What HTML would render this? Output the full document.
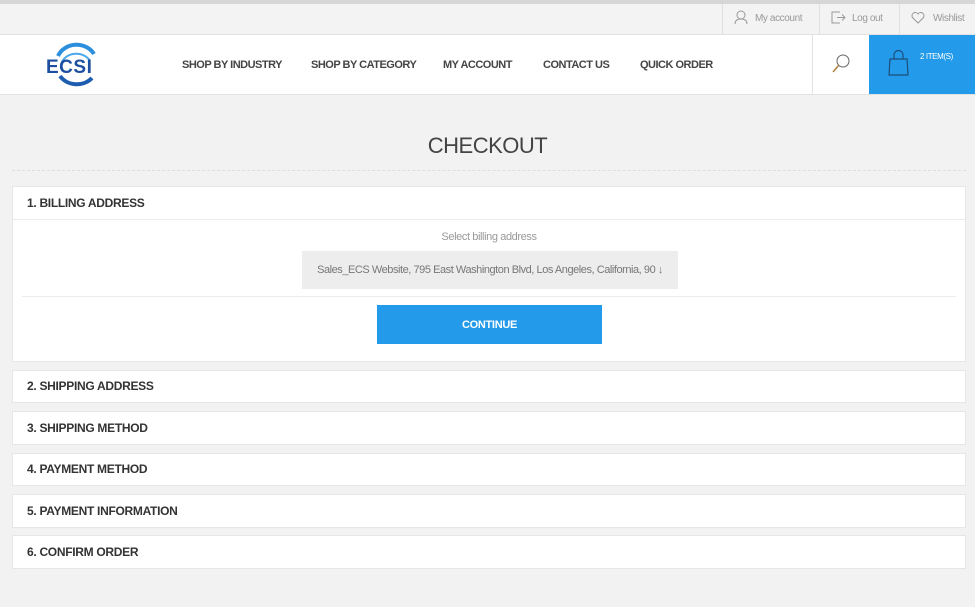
<!DOCTYPE html><html><head><style>
*{margin:0;padding:0;box-sizing:border-box}
body{width:975px;height:607px;background:#f2f2f2;font-family:"Liberation Sans",sans-serif;position:relative;overflow:hidden}
.a{position:absolute}
.top{left:0;top:0;width:975px;height:4px;background:#d6d6d6}
.hl{left:0;top:4px;width:975px;height:31px;background:#f3f3f3;border-bottom:1px solid #e2e2e2}
.lk{top:4px;height:30px;border-left:1px solid #e0e0e0;font-size:10px;color:#999;line-height:30px;letter-spacing:-.4px}
.nav{left:0;top:35px;width:975px;height:60px;background:#fff;border-bottom:1px solid #e2e2e2}
.nv{top:59px;font-size:11px;font-weight:bold;color:#444;letter-spacing:-.5px;white-space:nowrap}
.box{left:12px;width:954px;background:#fff;border:1px solid #e6e6e6}
.h{font-size:12px;font-weight:bold;color:#333;padding-left:14px;letter-spacing:-.3px}
</style></head><body>
<div class="a top"></div><div class="a hl"></div>
<div class="a lk" style="left:722px;width:97px;padding-left:32px">My account</div>
<div class="a lk" style="left:819px;width:80px;padding-left:32px">Log out</div>
<div class="a lk" style="left:899px;width:76px;padding-left:33px">Wishlist</div>
<svg class="a" style="left:734px;top:10px" width="14" height="14" fill="none" stroke="#999"><circle cx="7" cy="5" r="4"/><path d="M1 14c0-4 3-5 6-5s6 1 6 5"/></svg>
<svg class="a" style="left:831px;top:11px" width="15" height="13" fill="none" stroke="#999"><path d="M9 1H1v11h8M6 6.5h8M11 3.5l3 3-3 3"/></svg>
<svg class="a" style="left:911px;top:12px" width="14" height="12" fill="none" stroke="#999"><path d="M7 11L1.5 5.5A3 3 0 017 2a3 3 0 015.5 3.5z"/></svg>
<div class="a nav"></div>
<svg class="a" style="left:44px;top:40px" width="66" height="50"><path d="M14 16A20 18 0 0150 14" stroke="#2b8fde" stroke-width="4" fill="none"/><path d="M18 22A15 12 0 0146 21" stroke="#4aa8ea" stroke-width="2" fill="none"/><path d="M16 36A20 18 0 0048 38" stroke="#1d5db0" stroke-width="4" fill="none"/><text x="2" y="33" font-family="Liberation Sans" font-weight="bold" font-size="19" fill="#1d4fa0" letter-spacing="0.5">ECSI</text></svg>
<div class="a nv" style="left:182px">SHOP BY INDUSTRY</div>
<div class="a nv" style="left:311px">SHOP BY CATEGORY</div>
<div class="a nv" style="left:443px">MY ACCOUNT</div>
<div class="a nv" style="left:543px">CONTACT US</div>
<div class="a nv" style="left:640px">QUICK ORDER</div>
<div class="a" style="left:812px;top:35px;width:1px;height:59px;background:#e2e2e2"></div>
<svg class="a" style="left:831px;top:53px" width="20" height="22" fill="none" stroke="#666"><circle cx="12" cy="8" r="6"/><path d="M8 12L2 19" stroke="#b08040" stroke-width="1.5"/></svg>
<div class="a" style="left:869px;top:35px;width:106px;height:59px;background:#249aea"></div>
<svg class="a" style="left:888px;top:50px" width="22" height="27" fill="none" stroke="#1d4e7a" stroke-width="1.2"><path d="M2 9h17l1 16H1z"/><path d="M6 9V5a4.5 4.5 0 019 0v4"/></svg>
<div class="a" style="left:920px;top:52px;font-size:8px;color:#fff;letter-spacing:-.4px">2 ITEM(S)</div>
<div class="a" style="left:0;top:133px;width:975px;text-align:center;font-size:22px;color:#444;letter-spacing:-.5px">CHECKOUT</div>
<div class="a" style="left:12px;top:170px;width:954px;border-top:1px dashed #ddd"></div>
<div class="a box" style="top:186px;height:176px">
<div class="h" style="height:33px;line-height:33px;border-bottom:1px solid #ececec">1. BILLING ADDRESS</div>
<div class="a" style="left:0;width:952px;top:44px;text-align:center;font-size:11px;color:#999;letter-spacing:-.4px">Select billing address</div>
<div class="a" style="left:289px;top:64px;width:376px;height:38px;background:#ededed;font-size:11px;color:#777;line-height:38px;text-align:center;letter-spacing:-.45px;white-space:nowrap">Sales_ECS Website, 795 East Washington Blvd, Los Angeles, California, 90 ↓</div>
<div class="a" style="left:9px;top:109px;width:934px;border-top:1px solid #ececec"></div>
<div class="a" style="left:364px;top:118px;width:225px;height:39px;background:#249aea;color:#fff;font-size:11px;font-weight:bold;text-align:center;line-height:41px;letter-spacing:-.3px">CONTINUE</div>
</div>
<div class="a box h" style="top:370px;height:33px;line-height:31px">2. SHIPPING ADDRESS</div>
<div class="a box h" style="top:411px;height:34px;line-height:32px">3. SHIPPING METHOD</div>
<div class="a box h" style="top:453px;height:33px;line-height:31px">4. PAYMENT METHOD</div>
<div class="a box h" style="top:494px;height:34px;line-height:32px">5. PAYMENT INFORMATION</div>
<div class="a box h" style="top:535px;height:34px;line-height:32px">6. CONFIRM ORDER</div>
</body></html>
